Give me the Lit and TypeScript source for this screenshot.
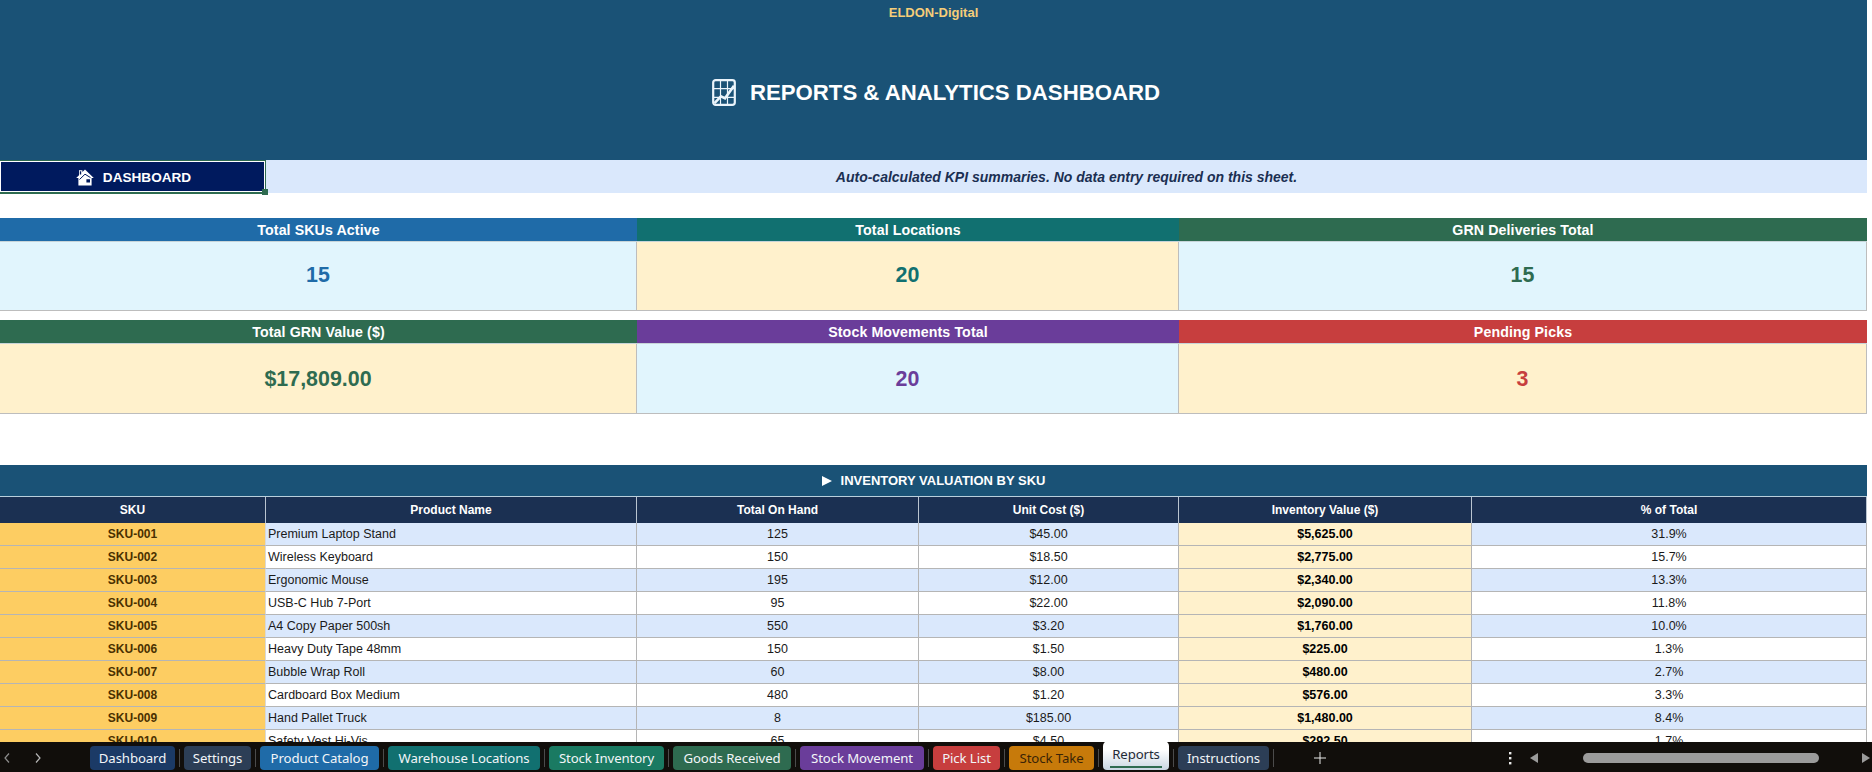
import { LitElement, html, css, svg } from "lit";
import { customElement } from "lit/decorators.js";

const kpis = [
  [
    { label: "Total SKUs Active", value: "15", head: "h-blue", text: "t-blue", bg: "b-sky" },
    { label: "Total Locations", value: "20", head: "h-teal", text: "t-teal", bg: "b-cream" },
    { label: "GRN Deliveries Total", value: "15", head: "h-green", text: "t-green", bg: "b-sky" },
  ],
  [
    { label: "Total GRN Value ($)", value: "$17,809.00", head: "h-green", text: "t-green", bg: "b-cream" },
    { label: "Stock Movements Total", value: "20", head: "h-purple", text: "t-purple", bg: "b-sky" },
    { label: "Pending Picks", value: "3", head: "h-red", text: "t-red", bg: "b-cream" },
  ],
];

const columns = ["SKU", "Product Name", "Total On Hand", "Unit Cost ($)", "Inventory Value ($)", "% of Total"];

const rows = [
  ["SKU-001", "Premium Laptop Stand", "125", "$45.00", "$5,625.00", "31.9%"],
  ["SKU-002", "Wireless Keyboard", "150", "$18.50", "$2,775.00", "15.7%"],
  ["SKU-003", "Ergonomic Mouse", "195", "$12.00", "$2,340.00", "13.3%"],
  ["SKU-004", "USB-C Hub 7-Port", "95", "$22.00", "$2,090.00", "11.8%"],
  ["SKU-005", "A4 Copy Paper 500sh", "550", "$3.20", "$1,760.00", "10.0%"],
  ["SKU-006", "Heavy Duty Tape 48mm", "150", "$1.50", "$225.00", "1.3%"],
  ["SKU-007", "Bubble Wrap Roll", "60", "$8.00", "$480.00", "2.7%"],
  ["SKU-008", "Cardboard Box Medium", "480", "$1.20", "$576.00", "3.3%"],
  ["SKU-009", "Hand Pallet Truck", "8", "$185.00", "$1,480.00", "8.4%"],
  ["SKU-010", "Safety Vest Hi-Vis", "65", "$4.50", "$292.50", "1.7%"],
];

const tabs = [
  { name: "Dashboard", w: 85, c: "c-navy" },
  { name: "Settings", w: 67, c: "c-slate" },
  { name: "Product Catalog", w: 119, c: "c-blue" },
  { name: "Warehouse Locations", w: 152, c: "c-teal" },
  { name: "Stock Inventory", w: 115, c: "c-sea" },
  { name: "Goods Received", w: 118, c: "c-green" },
  { name: "Stock Movement", w: 124, c: "c-purple" },
  { name: "Pick List", w: 67, c: "c-red" },
  { name: "Stock Take", w: 85, c: "c-orange" },
  { name: "Reports", w: 66, c: "c-active" },
  { name: "Instructions", w: 91, c: "c-slate" },
];

const chartIcon = svg`<svg class="chart" viewBox="0 0 24 28" width="24" height="27" preserveAspectRatio="none" fill="none" stroke="#eaf4fb">
  <rect x="1.2" y="1.2" width="21.6" height="25.6" rx="2.5" stroke-width="2.2"/>
  <path d="M8.5 2v24M15.5 2v24M2 10h20M2 19h20" stroke-width="1.2"/>
  <path d="M2.5 25 9 18l4 2 9-13" stroke-width="2.6"/>
</svg>`;

const homeIcon = svg`<svg viewBox="0 0 18 17" width="18" height="17">
  <path fill="#fff" d="M9 .5 17.8 9 15.6 9V16.5H2.4V9H.2L3 6.3V1.2H6.4V3Z"/>
  <path fill="#001a5e" d="M3.8 2.2h1.4v3.2H3.8zM10.4 10.2h3.6v3.2h-3.6z"/>
  <path d="M3.5 10.5 9 5.2 14.5 8.6" stroke="#001a5e" stroke-width="1" fill="none"/>
</svg>`;

@customElement("app-root")
export class AppRoot extends LitElement {
  static styles = css`
    :host {
      display: flex;
      flex-direction: column;
      width: 1872px;
      height: 772px;
      overflow: hidden;
      background: #fff;
      font-family: "Liberation Sans", Arial, sans-serif;
    }
    .sheet { flex: 1; min-height: 0; overflow: hidden; width: 1867px; }

    .banner { height: 160px; background: #1a5276; display: flex; flex-direction: column; align-items: center; }
    .brand { height: 25px; line-height: 25px; font-size: 13px; font-weight: 700; color: #f5cd79; }
    .title { flex: 1; display: flex; align-items: center; gap: 14px; padding-left: 5px; color: #fff; font-size: 22.2px; font-weight: 700; }
    .chart { display: block; }

    .subbar { height: 33px; display: grid; grid-template-columns: 266px 1fr; background: #dae8fc; }
    .selected {
      position: relative; display: flex; align-items: center; justify-content: center; gap: 9px;
      background: #001a5e; color: #fff; font-size: 13.6px; font-weight: 700; padding: 1px 0 0 2px;
      border: 1px solid #fff; margin: 1px 1px 1px 0;
      box-shadow: 0 0 0 1px #2e6b50, 0 1px 0 1px #2e6b50;
    }
    .selected svg { display: block; }
    .handle {
      position: absolute; right: -4px; bottom: -4px; width: 6px; height: 6px;
      background: #2e6b50;
    }
    .note {
      display: flex; align-items: center; justify-content: center;
      font-size: 14px; font-weight: 700; font-style: italic; color: #1b2f52;
    }

    .kpis { display: grid; grid-template-columns: 637px 542px 688px; }
    .kpis.first { margin-top: 25px; }
    .kpis.second { margin-top: 9px; }
    .khead {
      height: 23px; line-height: 24px; text-align: center; color: #fff; font-size: 14.2px;
      letter-spacing: .1px; font-weight: 700; border-bottom: 1px solid #c7d4d8;
    }
    .kval {
      display: flex; align-items: center; justify-content: center; box-sizing: border-box;
      font-size: 21.4px; font-weight: 700; border-bottom: 1px solid #bdbdbd; border-right: 1px solid #bdbdbd;
    }
    .kval.short { height: 69px; padding-bottom: 2px; }
    .kval.tall { height: 70px; padding-top: 2px; }
    .h-blue { background: #1f6ba8; }
    .h-teal { background: #117070; }
    .h-green { background: #2e6b50; }
    .h-purple { background: #6a3d9a; }
    .h-red { background: #c73e3e; }
    .t-blue { color: #1f6ba8; }
    .t-teal { color: #117070; }
    .t-green { color: #2e6b50; }
    .t-purple { color: #6a3d9a; }
    .t-red { color: #c73e3e; }
    .b-sky { background: #e1f5fd; }
    .b-cream { background: #fff1cc; }

    .section {
      margin-top: 51px; height: 31px; background: #1a5276; color: #fff;
      display: flex; align-items: center; justify-content: center; gap: 9px;
      font-size: 13px; font-weight: 700; border-bottom: 1px solid #b9cfdc;
    }
    .arrow { width: 0; height: 0; border-left: 10px solid #fff; border-top: 5px solid transparent; border-bottom: 5px solid transparent; }

    .table { display: grid; grid-template-columns: 266px 371px 282px 260px 293px 395px; }
    .th {
      height: 26px; display: flex; align-items: center; justify-content: center;
      background: #1b3052; color: #fff; font-size: 12px; font-weight: 700;
      border-right: 1px solid #b9c4d0; box-sizing: border-box;
    }
    .td {
      height: 23px; display: flex; align-items: center; justify-content: center;
      box-sizing: border-box; font-size: 12.5px; color: #1a1a1a;
      border-right: 1px solid #b5b5b5; border-bottom: 1px solid #b5b5b5;
    }
    .td.even { background: #dae8fc; }
    .td.odd { background: #fff; }
    .td.name { justify-content: flex-start; padding-left: 2px; }
    .td.sku { background: #fdcd62; color: #4a3000; font-size: 12px; font-weight: 700; border-right-color: #d8d8d8; }
    .td.value { background: #fff1cc; color: #000; font-weight: 700; }

    .tabbar {
      height: 30px; flex: none; background: #110e0b; display: flex; align-items: flex-end;
      font-family: "Noto Sans", "Open Sans", sans-serif; box-sizing: border-box; padding-bottom: 2px;
    }
    .nav { width: 90px; flex: none; height: 24px; display: flex; align-items: center; padding-left: 3px; gap: 23px; box-sizing: border-box; }
    .nav svg, .extras svg { display: block; }
    .tabs { display: flex; align-items: flex-end; }
    .tab {
      height: 24px; line-height: 24px; border-radius: 4px; text-align: center; color: #f2f5f8;
      font-size: 13.2px; letter-spacing: -.1px; white-space: nowrap; box-sizing: border-box;
    }
    .sep { width: 1px; height: 18px; background: #4b4b4b; margin: 0 4px 3px; flex: none; }
    .c-navy { background: #1b3a66; }
    .c-slate { background: #2c3e56; }
    .c-blue { background: #1f6ba8; }
    .c-teal { background: #117070; }
    .c-sea { background: #1a7a62; }
    .c-green { background: #2e6b50; }
    .c-purple { background: #6a3d9a; }
    .c-red { background: #c73e3e; }
    .c-orange { background: #c77a0a; color: #3a2406; }
    .c-active {
      height: 29px; line-height: 26px; color: #1f2a36;
      background: linear-gradient(#ffffff 30%, #c9d6e2); border-radius: 5px 5px 4px 4px; position: relative;
    }
    .c-active::after {
      content: ""; position: absolute; left: 7px; right: 7px; bottom: 2px; height: 2px; background: #2e6b50;
    }
    .extras { flex: 1; height: 24px; display: flex; align-items: center; }
    .plus { margin-left: 36px; }
    .dots { margin-left: 183px; }
    .leftarrow { margin-left: 18px; }
    .thumb { width: 236px; height: 10px; border-radius: 5px; background: #9b9b9b; margin-left: 45px; }
    .rightarrow { margin-left: 43px; }
  `;

  render() {
    return html`
      <div class="sheet">
        <div class="banner">
          <div class="brand">ELDON-Digital</div>
          <div class="title">${chartIcon}<span>REPORTS &amp; ANALYTICS DASHBOARD</span></div>
        </div>
        <div class="subbar">
          <div class="selected">${homeIcon}<span>DASHBOARD</span><i class="handle"></i></div>
          <div class="note">Auto-calculated KPI summaries. No data entry required on this sheet.</div>
        </div>
        ${kpis.map((row, r) => html`
          <div class="kpis ${r === 0 ? "first" : "second"}">
            ${row.map((k) => html`<div class="khead ${k.head}">${k.label}</div>`)}
            ${row.map((k) => html`<div class="kval ${r === 0 ? "short" : "tall"} ${k.text} ${k.bg}">${k.value}</div>`)}
          </div>
        `)}
        <div class="section"><i class="arrow"></i><span>INVENTORY VALUATION BY SKU</span></div>
        <div class="table">
          ${columns.map((c) => html`<div class="th">${c}</div>`)}
          ${rows.map((row, i) => row.map((cell, j) => {
            const stripe = i % 2 === 0 ? "even" : "odd";
            const kind = ["sku", "name", "", "", "value", ""][j];
            return html`<div class="td ${stripe} ${kind}">${cell}</div>`;
          }))}
        </div>
      </div>
      <div class="tabbar">
        <div class="nav">
          <svg width="8" height="12" viewBox="0 0 8 12" fill="none" stroke="#8d8d8d" stroke-width="1.2"><path d="M6 1.5 2 6l4 4.5"/></svg>
          <svg width="8" height="12" viewBox="0 0 8 12" fill="none" stroke="#b5b5b5" stroke-width="1.2"><path d="M2 1.5 6 6l-4 4.5"/></svg>
        </div>
        <div class="tabs">
          ${tabs.map((t) => html`
            <div class="tab ${t.c}" style="width:${t.w}px">${t.name}</div>
            <i class="sep"></i>
          `)}
        </div>
        <div class="extras">
          <svg class="plus" width="12" height="12" viewBox="0 0 12 12" stroke="#e8e8e8" stroke-width="1"><path d="M6 0v12M0 6h12"/></svg>
          <svg class="dots" width="3" height="13" viewBox="0 0 3 13" fill="#e8e8e8"><rect y="0" width="2.4" height="2.4"/><rect y="5" width="2.4" height="2.4"/><rect y="10" width="2.4" height="2.4"/></svg>
          <svg class="leftarrow" width="8" height="10" viewBox="0 0 8 10" fill="#9b9b9b"><path d="M8 0v10L0 5z"/></svg>
          <div class="thumb"></div>
          <svg class="rightarrow" width="8" height="10" viewBox="0 0 8 10" fill="#9b9b9b"><path d="M0 0v10l8-5z"/></svg>
        </div>
      </div>
    `;
  }
}
